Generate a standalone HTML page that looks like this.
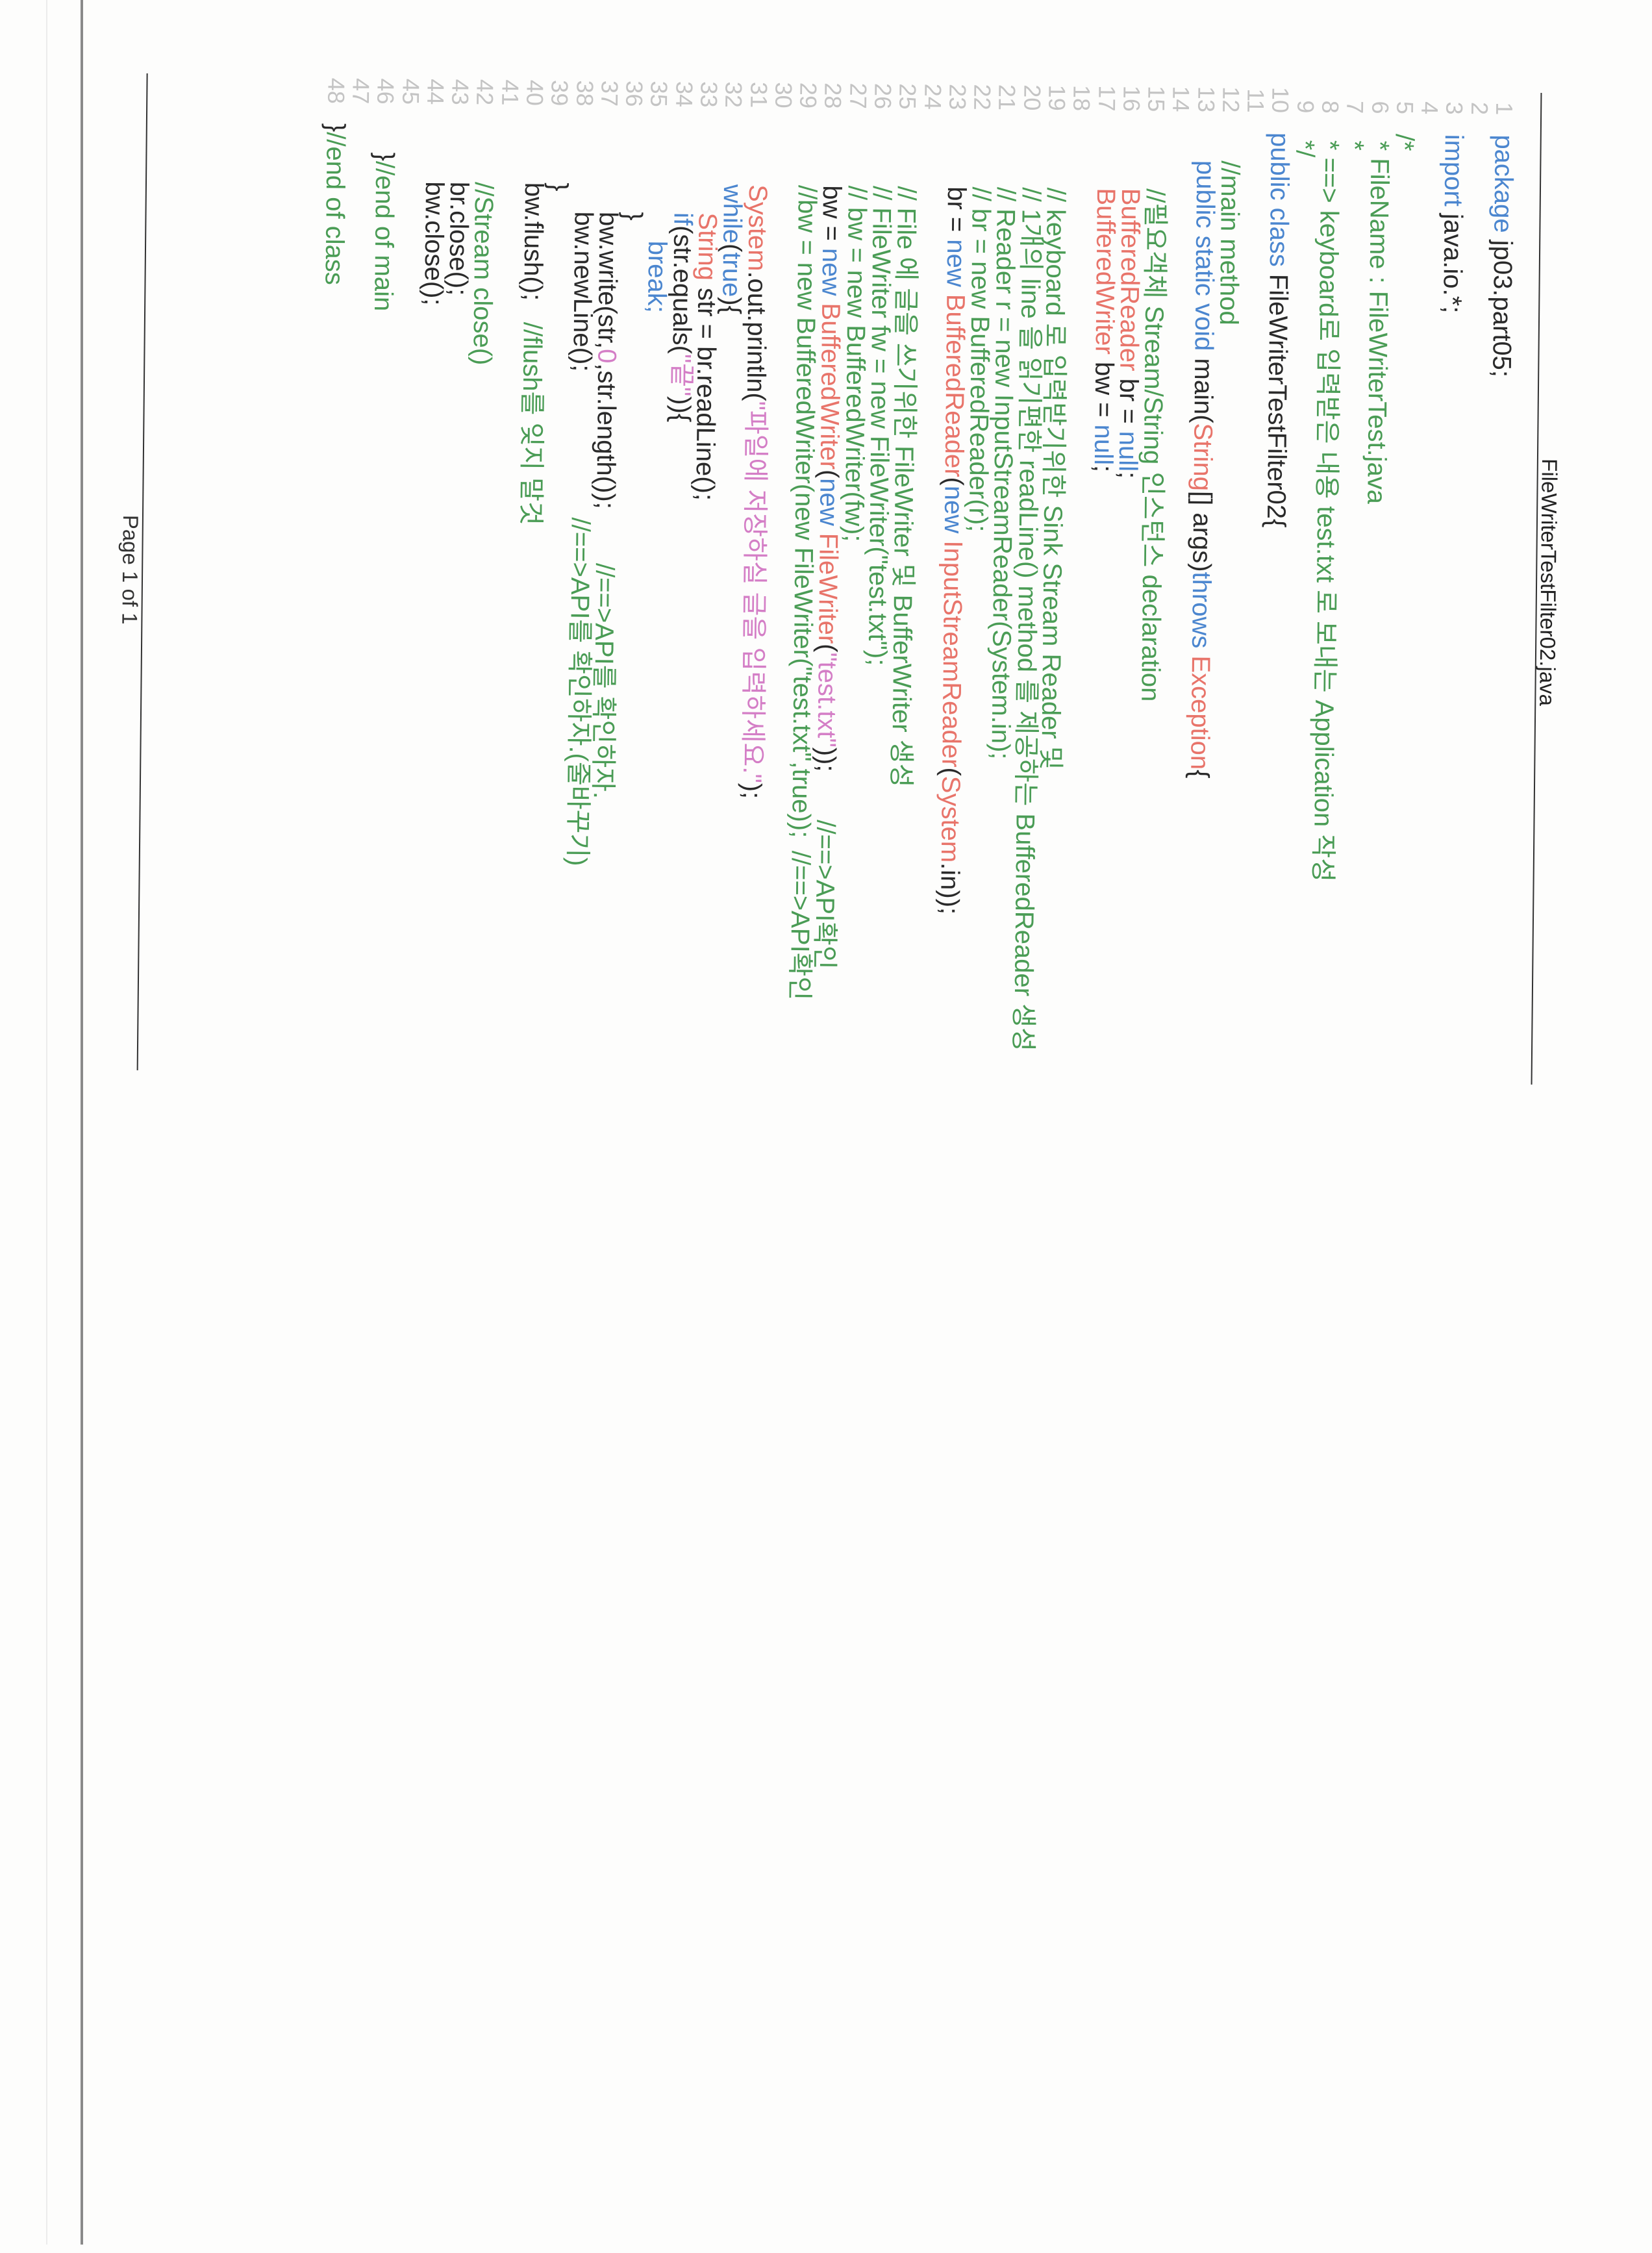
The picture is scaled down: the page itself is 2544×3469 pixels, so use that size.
<!DOCTYPE html>
<html><head><meta charset="utf-8">
<style>
html,body{margin:0;padding:0;}
body{width:2544px;height:3456px;background:#fdfdfc;position:relative;overflow:hidden;}
.edge1{position:absolute;left:124px;top:0;width:4px;height:3456px;background:#8a8a8a;}
.edge2{position:absolute;left:71px;top:0;width:2px;height:3456px;background:#ececec;}
.land{position:absolute;left:0;top:0;width:3456px;height:2544px;transform-origin:0 0;transform:translate(2544px,0) rotate(90deg);}
.frame{position:absolute;left:0;top:0;width:3456px;height:2544px;transform-origin:900px 1300px;transform:rotate(0.56deg);
 font-family:"Liberation Sans","Noto Sans CJK KR",sans-serif;color:#2a2a2a;}
.l{position:absolute;left:0;height:38px;width:3000px;font-size:40px;line-height:38px;white-space:pre;}
.l span{position:absolute;top:0;}
.n{left:92px;width:75px;text-align:right;color:#c4c4c4;font-size:36px;}
.g{color:#4a9c55;} .b{color:#4b86cf;} .r{color:#e8746a;} .p{color:#d47ec6;} .k{color:#2a2a2a;}
.l span span{position:static;}
.hdr{position:absolute;left:695px;top:143px;font-size:33px;line-height:33px;white-space:pre;color:#222;}
.rule{position:absolute;height:2px;background:#333;}
.foot{position:absolute;left:803px;top:2327px;font-size:33px;line-height:33px;white-space:pre;color:#333;}
</style></head><body>
<div class="edge2"></div><div class="edge1"></div>
<div class="land"><div class="frame">
<div class="hdr">FileWriterTestFilter02.java</div>
<div class="rule" style="left:132px;top:177px;width:1527px;"></div>
<div class="rule" style="left:123px;top:2324px;width:1535px;"></div>
<div class="foot">Page 1 of 1</div>

<div class="l" style="top:216px"><span class="n">1</span><span style="left:197px"><span class="b">package</span> jp03.part05;</span></div>
<div class="l" style="top:254px"><span class="n">2</span></div>
<div class="l" style="top:293px"><span class="n">3</span><span style="left:197px"><span class="b">import</span> java.io.*;</span></div>
<div class="l" style="top:331px"><span class="n">4</span></div>
<div class="l" style="top:369px"><span class="n">5</span><span class="g" style="left:197px">/*</span></div>
<div class="l" style="top:407px"><span class="n">6</span><span class="g" style="left:197px"> * FileName : FileWriterTest.java</span></div>
<div class="l" style="top:446px"><span class="n">7</span><span class="g" style="left:197px"> *</span></div>
<div class="l" style="top:484px"><span class="n">8</span><span class="g" style="left:197px"> * ==&gt; keyboard로 입력받은 내용 test.txt 로 보내는 Application 작성</span></div>
<div class="l" style="top:522px"><span class="n">9</span><span class="g" style="left:197px"> */</span></div>
<div class="l" style="top:561px"><span class="n">10</span><span style="left:197px"><span class="b">public class</span> FileWriterTestFilter02{</span></div>
<div class="l" style="top:599px"><span class="n">11</span></div>
<div class="l" style="top:637px"><span class="n">12</span><span class="g" style="left:241px">//main method</span></div>
<div class="l" style="top:675px"><span class="n">13</span><span style="left:241px"><span class="b">public static void</span> main(<span class="r">String</span>[] args)<span class="b">throws</span> <span class="r">Exception</span>{</span></div>
<div class="l" style="top:714px"><span class="n">14</span></div>
<div class="l" style="top:752px"><span class="n">15</span><span class="g" style="left:285px">//필요객체 Stream/String 인스턴스 declaration</span></div>
<div class="l" style="top:790px"><span class="n">16</span><span style="left:285px"><span class="r">BufferedReader</span> br = <span class="b">null</span>;</span></div>
<div class="l" style="top:828px"><span class="n">17</span><span style="left:285px"><span class="r">BufferedWriter</span> bw = <span class="b">null</span>;</span></div>
<div class="l" style="top:867px"><span class="n">18</span></div>
<div class="l" style="top:905px"><span class="n">19</span><span class="g" style="left:285px">// keyboard 로 입력받기위한 Sink Stream Reader 및</span></div>
<div class="l" style="top:943px"><span class="n">20</span><span class="g" style="left:285px">// 1개의 line 을 읽기편한 readLine() method 를 제공하는 BufferedReader 생성</span></div>
<div class="l" style="top:982px"><span class="n">21</span><span class="g" style="left:285px">// Reader r = new InputStreamReader(System.in);</span></div>
<div class="l" style="top:1020px"><span class="n">22</span><span class="g" style="left:285px">// br = new BufferedReader(r);</span></div>
<div class="l" style="top:1058px"><span class="n">23</span><span style="left:285px">br = <span class="b">new</span> <span class="r">BufferedReader</span>(<span class="b">new</span> <span class="r">InputStreamReader</span>(<span class="r">System</span>.in));</span></div>
<div class="l" style="top:1096px"><span class="n">24</span></div>
<div class="l" style="top:1135px"><span class="n">25</span><span class="g" style="left:285px">// File 에 글을 쓰기위한 FileWriter 및 BufferWriter 생성</span></div>
<div class="l" style="top:1173px"><span class="n">26</span><span class="g" style="left:285px">// FileWriter fw = new FileWriter("test.txt");</span></div>
<div class="l" style="top:1211px"><span class="n">27</span><span class="g" style="left:285px">// bw = new BufferedWriter(fw);</span></div>
<div class="l" style="top:1250px"><span class="n">28</span><span style="left:285px">bw = <span class="b">new</span> <span class="r">BufferedWriter</span>(<span class="b">new</span> <span class="r">FileWriter</span>(<span class="p">"test.txt"</span>));</span><span class="g" style="left:1262px">//==&gt;API확인</span></div>
<div class="l" style="top:1288px"><span class="n">29</span><span class="g" style="left:285px">//bw = new BufferedWriter(new FileWriter("test.txt",true));</span><span class="g" style="left:1310px">//==&gt;API확인</span></div>
<div class="l" style="top:1326px"><span class="n">30</span></div>
<div class="l" style="top:1364px"><span class="n">31</span><span style="left:285px"><span class="r">System</span>.out.println(<span class="p">"파일에 저장하실 글을 입력하세요."</span>);</span></div>
<div class="l" style="top:1403px"><span class="n">32</span><span style="left:285px"><span class="b">while</span>(<span class="b">true</span>){</span></div>
<div class="l" style="top:1441px"><span class="n">33</span><span style="left:329px"><span class="r">String</span> str = br.readLine();</span></div>
<div class="l" style="top:1479px"><span class="n">34</span><span style="left:329px"><span class="b">if</span>(str.equals(<span class="p">"끝"</span>)){</span></div>
<div class="l" style="top:1518px"><span class="n">35</span><span class="b" style="left:373px">break;</span></div>
<div class="l" style="top:1556px"><span class="n">36</span><span style="left:329px">}</span></div>
<div class="l" style="top:1594px"><span class="n">37</span><span style="left:329px">bw.write(str,<span class="p">0</span>,str.length());</span><span class="g" style="left:870px">//==&gt;API를 확인하자.</span></div>
<div class="l" style="top:1632px"><span class="n">38</span><span style="left:329px">bw.newLine();</span><span class="g" style="left:800px">//==&gt;API를 확인하자.(줄바꾸기)</span></div>
<div class="l" style="top:1671px"><span class="n">39</span><span style="left:285px">}</span></div>
<div class="l" style="top:1709px"><span class="n">40</span><span style="left:285px">bw.flush();</span><span class="g" style="left:500px">//flush를 잊지 말것</span></div>
<div class="l" style="top:1747px"><span class="n">41</span></div>
<div class="l" style="top:1786px"><span class="n">42</span><span class="g" style="left:285px">//Stream close()</span></div>
<div class="l" style="top:1824px"><span class="n">43</span><span style="left:285px">br.close();</span></div>
<div class="l" style="top:1862px"><span class="n">44</span><span style="left:285px">bw.close();</span></div>
<div class="l" style="top:1900px"><span class="n">45</span></div>
<div class="l" style="top:1939px"><span class="n">46</span><span style="left:241px">}<span class="g">//end of main</span></span></div>
<div class="l" style="top:1977px"><span class="n">47</span></div>
<div class="l" style="top:2015px"><span class="n">48</span><span style="left:197px">}<span class="g">//end of class</span></span></div>
</div></div>
</body></html>
